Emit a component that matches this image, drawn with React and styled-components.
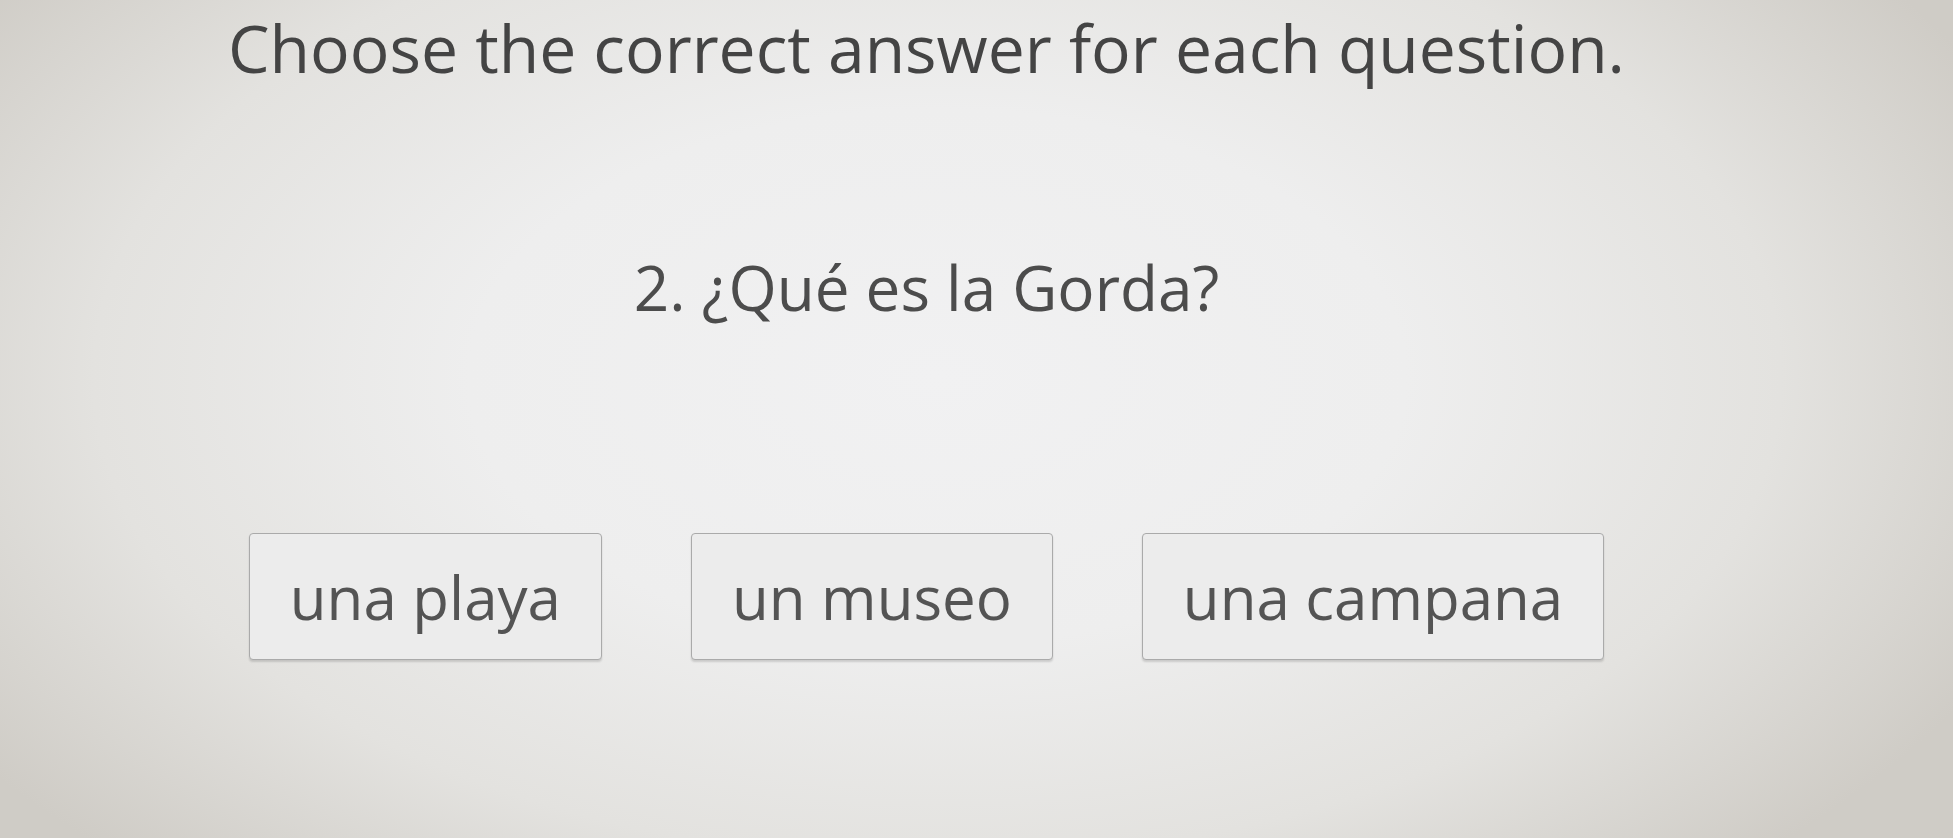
import React from 'react'
import styled, { createGlobalStyle } from 'styled-components';

const GlobalStyle = createGlobalStyle`
    html, body {
        margin: 0;
        padding: 0;
    }
    body {
        font-family: "Open Sans", "Noto Sans", sans-serif;
        background: #e4e3e1;
    }
`;

const answers = ['una playa', 'un museo', 'una campana'];

function App() {
    return (
        <PageStyled>
            <GlobalStyle />
            <h1 className="title">Choose the correct answer for each question.</h1>
            <h2 className="question">2. ¿Qué es la Gorda?</h2>
            <AnswerRow>
                {answers.map((answer) => (
                    <AnswerButton key={answer} type="button">{answer}</AnswerButton>
                ))}
            </AnswerRow>
        </PageStyled>
    )
}

const PageStyled = styled.div`
    box-sizing: border-box;
    width: 1953px;
    height: 838px;
    overflow: hidden;
    padding: 2px 100px 0 0;
    display: flex;
    flex-direction: column;
    align-items: center;
    background: radial-gradient(ellipse 60% 80% at 48% 45%, #f1f1f2 0%, #eeeeee 40%, #e3e2df 72%, #cfccc6 100%);
    .title{
        margin: 0;
        font-size: 66px;
        font-weight: 400;
        line-height: 90px;
        color: #444444;
    }
    .question{
        margin: 153px 0 0;
        font-size: 62px;
        font-weight: 400;
        line-height: 84px;
        color: #4c4c4c;
    }
`;

const AnswerRow = styled.div`
    display: flex;
    gap: 89px;
    margin-top: 204px;
`;

const AnswerButton = styled.button`
    font-family: "Open Sans", "Noto Sans", sans-serif;
    font-size: 60px;
    line-height: 82px;
    color: #545454;
    background: #ececec;
    border: 1px solid #aaaaaa;
    border-radius: 4px;
    padding: 22px 40px 21px;
    box-shadow: 0 2px 2px rgba(0, 0, 0, 0.14);
    cursor: pointer;
`;

export default App;
